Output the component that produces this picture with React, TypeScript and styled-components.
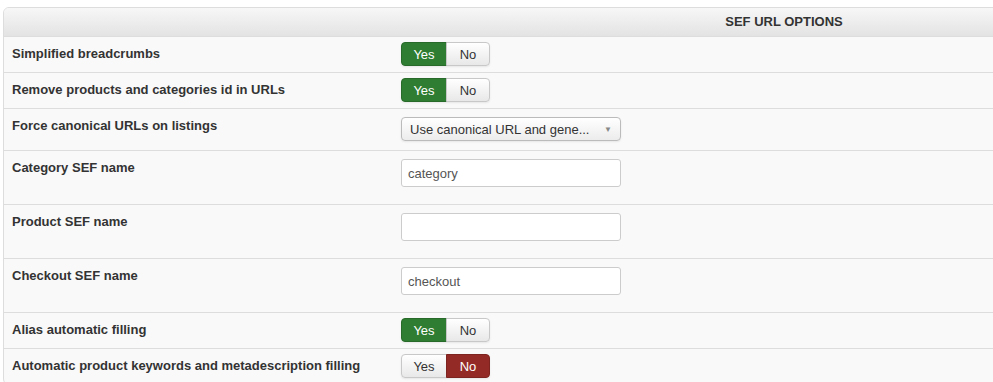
import React from "react";
import styled, { createGlobalStyle } from "styled-components";

const Global = createGlobalStyle`
  html, body { margin: 0; padding: 0; background: #ffffff; overflow: hidden; }
  body { font-family: "Liberation Sans", Arial, Helvetica, sans-serif; font-size: 13px; color: #333; }
`;

const Viewport = styled.div`
  width: 993px;
  height: 382px;
  overflow: hidden;
  padding: 7px 0 0 3px;
  box-sizing: border-box;
`;

const Panel = styled.div`
  width: 1172px;
  border: 1px solid #dddddd;
  border-radius: 6px;
  background: #f9f9f9;
  overflow: hidden;
`;

const Header = styled.div`
  display: grid;
  grid-template-columns: 388px 1fr;
  height: 28px;
  background: linear-gradient(to bottom, #f7f7f7, #e3e3e3);
`;

const HeaderTitle = styled.div`
  grid-column: 2;
  text-align: center;
  font-weight: bold;
  font-size: 13px;
  line-height: 28px;
  color: #333;
`;

const Row = styled.div`
  display: grid;
  grid-template-columns: 388px 1fr;
  border-top: 1px solid #dddddd;
`;

const Label = styled.div`
  padding: 8px 8px;
  font-weight: bold;
  font-size: 13px;
  line-height: 18px;
  color: #333;
`;

type Kind = "toggle" | "select" | "input";

const Value = styled.div<{ $kind: Kind }>`
  padding-left: 9px;
  padding-top: ${(p) => (p.$kind === "toggle" ? "5px" : "8px")};
  padding-bottom: ${(p) => (p.$kind === "toggle" ? "6px" : p.$kind === "select" ? "9px" : "17px")};
  display: flex;
  align-items: flex-start;
`;

const Toggle = styled.div`
  display: inline-flex;
  height: 24px;
  border-radius: 4px;
  box-shadow: 0 1px 2px rgba(0, 0, 0, 0.08);
`;

const ToggleButton = styled.span<{ $active?: "yes" | "no" }>`
  display: flex;
  align-items: center;
  justify-content: center;
  box-sizing: border-box;
  height: 24px;
  padding: 0 12px;
  font-size: 13px;
  border: 1px solid ${(p) => (p.$active === "yes" ? "#276a2a" : p.$active === "no" ? "#7e2420" : "#c8c8c8")};
  color: ${(p) => (p.$active ? "#ffffff" : "#333333")};
  background: ${(p) =>
    p.$active === "yes"
      ? "#2f7d32"
      : p.$active === "no"
      ? "#942a25"
      : "linear-gradient(to bottom, #ffffff, #e8e8e8)"};
  &:first-child {
    border-radius: 4px 0 0 4px;
    width: 46px;
  }
  &:last-child {
    border-radius: 0 4px 4px 0;
    width: 44px;
    margin-left: -1px;
  }
`;

const Select = styled.div`
  box-sizing: border-box;
  width: 220px;
  height: 24px;
  border: 1px solid #bbbbbb;
  border-radius: 4px;
  background: linear-gradient(to bottom, #ffffff, #ececec);
  box-shadow: 0 1px 2px rgba(0, 0, 0, 0.08);
  display: flex;
  align-items: center;
  justify-content: space-between;
  padding: 0 8px 0 8px;
  font-size: 13px;
  color: #333;
`;

const Caret = styled.span`
  font-size: 8px;
  color: #888;
`;

const Input = styled.div`
  box-sizing: border-box;
  width: 220px;
  height: 28px;
  border: 1px solid #cccccc;
  border-radius: 3px;
  background: #ffffff;
  display: flex;
  align-items: center;
  padding: 0 6px;
  font-size: 13px;
  color: #555;
`;

type Field =
  | { label: string; kind: "toggle"; value: "yes" | "no" }
  | { label: string; kind: "select"; value: string }
  | { label: string; kind: "input"; value: string };

const fields: Field[] = [
  { label: "Simplified breadcrumbs", kind: "toggle", value: "yes" },
  { label: "Remove products and categories id in URLs", kind: "toggle", value: "yes" },
  { label: "Force canonical URLs on listings", kind: "select", value: "Use canonical URL and gene..." },
  { label: "Category SEF name", kind: "input", value: "category" },
  { label: "Product SEF name", kind: "input", value: "" },
  { label: "Checkout SEF name", kind: "input", value: "checkout" },
  { label: "Alias automatic filling", kind: "toggle", value: "yes" },
  { label: "Automatic product keywords and metadescription filling", kind: "toggle", value: "no" },
];

export default function App() {
  return (
    <>
      <Global />
      <Viewport>
        <Panel>
          <Header>
            <HeaderTitle>SEF URL OPTIONS</HeaderTitle>
          </Header>
          {fields.map((f) => (
            <Row key={f.label}>
              <Label>{f.label}</Label>
              <Value $kind={f.kind}>
                {f.kind === "toggle" && (
                  <Toggle>
                    <ToggleButton $active={f.value === "yes" ? "yes" : undefined}>Yes</ToggleButton>
                    <ToggleButton $active={f.value === "no" ? "no" : undefined}>No</ToggleButton>
                  </Toggle>
                )}
                {f.kind === "select" && (
                  <Select>
                    <span>{f.value}</span>
                    <Caret>▼</Caret>
                  </Select>
                )}
                {f.kind === "input" && <Input>{f.value}</Input>}
              </Value>
            </Row>
          ))}
        </Panel>
      </Viewport>
    </>
  );
}
